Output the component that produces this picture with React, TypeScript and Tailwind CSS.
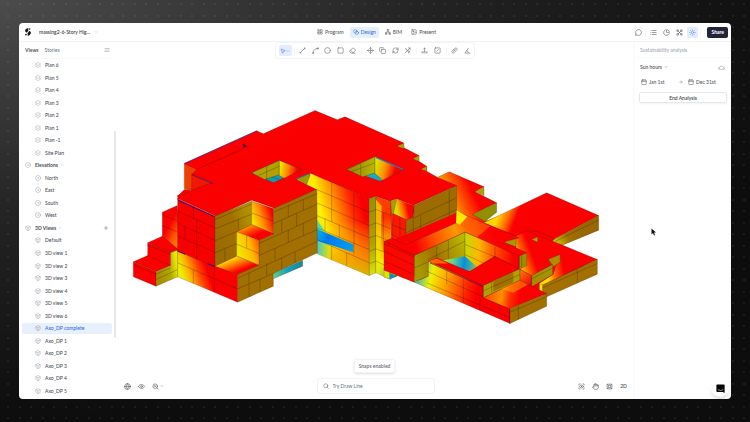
import { useState } from 'react';
import clsx from 'clsx';
import {
  ArrowRight,
  Blend,
  Box,
  Calendar,
  ChartPie,
  ChevronDown,
  ChevronUp,
  Circle,
  CircleDot,
  Copy,
  Eraser,
  Eye,
  Hand,
  Image,
  LayoutGrid,
  List,
  MessageCircle,
  MousePointer2,
  Move,
  Network,
  Plus,
  RefreshCw,
  ScanEye,
  Search,
  SearchX,
  Square,
  SquareSlash,
  Sun,
  Layers2,
  Globe,
  type LucideIcon,
} from 'lucide-react';

interface ViewItem {
  label: string;
  kind: 'plan' | 'elevation' | 'view3d' | 'group';
}

const viewItems: ViewItem[] = [
  { label: 'Plan 6', kind: 'plan' },
  { label: 'Plan 5', kind: 'plan' },
  { label: 'Plan 4', kind: 'plan' },
  { label: 'Plan 3', kind: 'plan' },
  { label: 'Plan 2', kind: 'plan' },
  { label: 'Plan 1', kind: 'plan' },
  { label: 'Plan -1', kind: 'plan' },
  { label: 'Site Plan', kind: 'plan' },
  { label: 'Elevations', kind: 'group' },
  { label: 'North', kind: 'elevation' },
  { label: 'East', kind: 'elevation' },
  { label: 'South', kind: 'elevation' },
  { label: 'West', kind: 'elevation' },
  { label: '3D Views', kind: 'group' },
  { label: 'Default', kind: 'view3d' },
  { label: '3D view 1', kind: 'view3d' },
  { label: '3D view 2', kind: 'view3d' },
  { label: '3D view 3', kind: 'view3d' },
  { label: '3D view 4', kind: 'view3d' },
  { label: '3D view 5', kind: 'view3d' },
  { label: '3D view 6', kind: 'view3d' },
  { label: 'Axo_DP complete', kind: 'view3d' },
  { label: 'Axo_DP 1', kind: 'view3d' },
  { label: 'Axo_DP 2', kind: 'view3d' },
  { label: 'Axo_DP 3', kind: 'view3d' },
  { label: 'Axo_DP 4', kind: 'view3d' },
  { label: 'Axo_DP 5', kind: 'view3d' },
];

const viewIcons = { plan: Layers2, elevation: CircleDot, view3d: Box };

const modes: { label: string; icon: LucideIcon }[] = [
  { label: 'Program', icon: LayoutGrid },
  { label: 'Design', icon: Blend },
  { label: 'BIM', icon: Network },
  { label: 'Present', icon: Image },
];

type Tool = { label: string; icon?: LucideIcon; d?: string };

const toolGroups: Tool[][] = [
  [
    { label: 'Line', d: 'M5 19L19 5M3 21h3v-3H3zM18 3h3v3h-3z' },
    { label: 'Arc', d: 'M4 20Q4 6 20 5M2 19h4v3H2zM18 3h4v4h-4z' },
    { label: 'Circle', icon: Circle },
    { label: 'Rectangle', icon: Square },
    { label: 'Erase', icon: Eraser },
  ],
  [
    { label: 'Move', icon: Move },
    { label: 'Copy', icon: Copy },
    { label: 'Rotate', icon: RefreshCw },
    { label: 'Scale', d: 'M3 21L21 3M14 3h7v7M3 5l6 2 2 6M13 13l3 7 5-5z' },
  ],
  [
    { label: 'Push pull', d: 'M12 3v12M8 7l4-4 4 4M4 14l-1 6h18l-1-6M8 15h8' },
    { label: 'Split', icon: SquareSlash },
  ],
  [
    { label: 'Measure', d: 'M3 15L15 3q6 0 6 6L9 21q-6 0-6-6ZM7 16L17 6M9 9l4 4' },
    { label: 'Angle', d: 'M16 3L3 21h19M9 13q6 1 6 8' },
  ],
];

function Glyph({ d, size = 7 }: { d: string; size?: number }) {
  return (
    <svg viewBox="0 0 24 24" width={size} height={size} fill="none" stroke="currentColor" strokeWidth="2" strokeLinejoin="round">
      <path d={d} />
    </svg>
  );
}

function Divider() {
  return <span className="mx-[2px] h-[6px] w-px shrink-0 bg-gray-100" />;
}

function Logo() {
  return (
    <svg viewBox="0 0 18 24" className="h-2 w-[6px]" fill="#15171c">
      <path d="M10 0v8L5 14Q0 12 0 7 2 1 10 0Z" />
      <path d="M13 8q5 2 5 7-2 7-10 9v-8Z" />
      <circle cx="14" cy="3" r="2.4" />
      <circle cx="3" cy="20" r="2.4" />
    </svg>
  );
}

function TopBar() {
  const [mode, setMode] = useState('Design');

  return (
    <header className="grid h-[19px] shrink-0 grid-cols-[1fr_auto_1fr] items-center border-b border-gray-100 pr-[3px] pl-[6px]">
      <div className="flex items-center gap-2">
        <Logo />
        <button className="flex items-center gap-1 font-semibold text-[#44474e]">
          massing2-6-Story Hig...
          <ChevronDown size={4} className="text-gray-400" />
        </button>
      </div>

      <nav className="flex items-center gap-[3px]">
        {modes.map(({ label, icon: Icon }) => (
          <button
            key={label}
            onClick={() => setMode(label)}
            className={clsx(
              'flex h-[11px] items-center gap-[2px] rounded-[2px] px-[3px] font-medium',
              label === mode ? 'bg-[#e6efff] text-[#3b74e0]' : 'text-[#55585f]',
            )}
          >
            <Icon size={6} />
            {label}
          </button>
        ))}
      </nav>

      <div className="flex items-center justify-end text-[#55585f]">
        <button aria-label="Comments" className="p-px"><MessageCircle size={7} /></button>
        <Divider />
        <button aria-label="Layers" className="ml-px p-px"><List size={7} /></button>
        <button aria-label="Metrics" className="ml-1 p-px"><ChartPie size={7} /></button>
        <button aria-label="Graph" className="ml-1 p-px">
          <Glyph d="M7 7l10 10M17 7L7 17M3 3h5v5H3zM16 3h5v5h-5zM3 16h5v5H3zM16 16h5v5h-5z" />
        </button>
        <button aria-label="Sun" className="ml-[3px] rounded-[2px] bg-[#e3edff] p-[2px] text-[#5b8def]">
          <Sun size={7} />
        </button>
        <Divider />
        <button className="ml-1 h-[11px] rounded-[2px] bg-[#22243a] px-1 font-bold text-white">Share</button>
      </div>
    </header>
  );
}

function Sidebar() {
  const [selected, setSelected] = useState('Axo_DP complete');

  return (
    <aside className="relative flex w-[97px] shrink-0 flex-col">
      <div className="mr-1 flex h-[17px] shrink-0 items-center gap-[6px] border-b border-gray-50 pr-[2px] pl-[6px]">
        <button className="font-bold text-[#55585f]">Views</button>
        <button className="text-gray-500">Stories</button>
        <button aria-label="Filter views" className="ml-auto text-gray-500">
          <Glyph size={6} d="M2 7h13M19 7h3M17 4v6M2 17h3M9 17h13M7 14v6" />
        </button>
      </div>
      <ul className="flex flex-1 flex-col pr-1 pb-[2px] pl-[3px]">
        {viewItems.map(({ label, kind }) => {
          if (kind === 'group') {
            const Icon = label === '3D Views' ? Box : CircleDot;
            return (
              <li key={label} className="flex flex-1 items-center gap-1 pr-[3px] pl-[3px] text-[#4b4e55]">
                <Icon size={6} className="text-gray-400" />
                <button className="flex items-center gap-[2px] font-bold">
                  {label}
                  <ChevronUp size={4} className="text-gray-400" />
                </button>
                {label === '3D Views' && (
                  <button aria-label="Add 3D view" className="ml-auto text-gray-500"><Plus size={6} /></button>
                )}
              </li>
            );
          }
          const Icon = viewIcons[kind];
          const active = label === selected;
          return (
            <li key={label} className="flex flex-1 items-center">
              <button
                onClick={() => setSelected(label)}
                className={clsx(
                  'flex h-[11px] w-full items-center gap-1 rounded-[2px] pl-[13px] font-medium',
                  active ? 'bg-[#e8effd] text-[#2f6ce5]' : 'text-[#4b4e55]',
                )}
              >
                <Icon size={6} className="text-gray-400" />
                {label}
              </button>
            </li>
          );
        })}
      </ul>
      <span className="absolute top-1/4 right-0 h-[207px] w-[2px] rounded-full bg-gray-200" />
    </aside>
  );
}

function Face({ p, fill = '#fb0000' }: { p: string; fill?: string }) {
  return <polygon points={p} fill={fill} stroke="#4a1c00" strokeWidth="1" strokeOpacity="0.7" strokeLinejoin="round" />;
}

function Joints({ d }: { d: string }) {
  return <path d={d} fill="none" stroke="#2a1500" strokeWidth="1.3" strokeOpacity="0.6" />;
}

interface RampProps {
  id: string;
  from: [number, number];
  to: [number, number];
  stops: [number, string][];
}

function Ramp({ id, from, to, stops }: RampProps) {
  return (
    <linearGradient id={id} gradientUnits="userSpaceOnUse" x1={from[0]} y1={from[1]} x2={to[0]} y2={to[1]}>
      {stops.map(([offset, color]) => (
        <stop key={offset} offset={offset} stopColor={color} />
      ))}
    </linearGradient>
  );
}

const OCHRE = '#a17000';
const OLIVE = '#b0a000';
const YELLOW = '#f0ec00';
const RED = '#fb0000';

// Sun-hours heat map on the massing, each group drawn in its own local origin
function Massing() {
  return (
    <svg viewBox="348 180 1551 897" className="min-h-0 w-full flex-1" role="img" aria-label="Sun hours analysis of the massing">
      <defs>
        <Ramp id="eastRoof" from={[225, 150]} to={[290, 120]} stops={[[0, '#f5a000'], [0.4, '#ff5a00'], [1, RED]]} />
        <Ramp id="farRoof" from={[318, 180]} to={[395, 210]} stops={[[0, '#e0d800'], [0.35, '#ffd800'], [0.7, '#ff7000'], [1, RED]]} />
        <Ramp id="farWall" from={[525, 250]} to={[600, 210]} stops={[[0, '#c8c800'], [0.5, OCHRE], [1, '#986800']]} />
        <Ramp id="lowRoof" from={[500, 330]} to={[550, 322]} stops={[[0, '#ffe000'], [0.4, '#ff7000'], [1, RED]]} />
        <Ramp id="kneeRoof" from={[405, 270]} to={[445, 255]} stops={[[0, '#f8c000'], [0.4, '#ff6000'], [1, RED]]} />
        <Ramp id="stepWall" from={[460, 380]} to={[540, 300]} stops={[[0, '#a88800'], [1, '#98a000']]} />
        <Ramp id="deck" from={[110, 270]} to={[330, 190]} stops={[[0, RED], [0.25, '#ff5000'], [0.55, '#f89800'], [0.8, '#ff5000'], [1, RED]]} />
        <Ramp id="courtLeft" from={[110, 320]} to={[255, 250]} stops={[[0, '#a89800'], [0.4, OCHRE], [1, '#b8b800']]} />
        <Ramp id="courtRight" from={[255, 270]} to={[400, 280]} stops={[[0, '#c8d800'], [0.3, '#ffb400'], [0.6, '#ff5400'], [1, RED]]} />
        <Ramp id="courtFloor" from={[180, 310]} to={[290, 325]} stops={[[0, '#f0e000'], [0.35, '#60d090'], [0.65, '#0090e0'], [1, '#80c060']]} />
        <Ramp id="southWall" from={[103, 350]} to={[290, 400]} stops={[[0, '#20b0c0'], [0.14, '#90d060'], [0.25, '#f0f000'], [0.5, '#ffa000'], [0.85, '#ff2000'], [1, RED]]} />
        <Ramp id="terrace" from={[320, 400]} to={[420, 415]} stops={[[0, '#ff5000'], [0.45, '#ff9000'], [0.7, '#ff3000'], [1, RED]]} />
        <Ramp id="tip" from={[415, 330]} to={[455, 375]} stops={[[0, '#ff8800'], [1, '#f00010']]} />

        <Ramp id="innerWall" from={[40, 370]} to={[190, 330]} stops={[[0, '#d8ee20'], [0.2, '#fff000'], [0.5, '#ff9000'], [0.8, '#ff2800'], [1, RED]]} />
        <linearGradient id="innerFade" x1="0" y1="0" x2="0" y2="1">
          <stop offset="0.45" stopColor="#ffd800" stopOpacity="0" />
          <stop offset="0.8" stopColor="#f4a800" stopOpacity="0.7" />
          <stop offset="1" stopColor="#d8b800" />
        </linearGradient>
        <Ramp id="skyBand" from={[50, 400]} to={[160, 450]} stops={[[0, '#00b0e8'], [0.3, '#0078f0'], [1, '#00a0f0']]} />
        <Ramp id="cyanGlow" from={[50, 440]} to={[90, 440]} stops={[[0, '#40c8d0'], [1, '#e8e000']]} />
        <Ramp id="pier" from={[208, 300]} to={[208, 520]} stops={[[0, '#989000'], [0.6, OLIVE], [1, '#d0e010']]} />
        <Ramp id="bay" from={[240, 310]} to={[240, 530]} stops={[[0, '#ff4000'], [0.2, '#ff3000'], [0.5, '#ff9a00'], [0.8, '#f8e800'], [1, '#b0d830']]} />
        <Ramp id="nook" from={[290, 325]} to={[322, 318]} stops={[[0, '#e0d800'], [0.5, '#ff7000'], [1, RED]]} />
        <Ramp id="wellRight" from={[225, 200]} to={[285, 215]} stops={[[0, '#d8e800'], [0.5, '#ff9000'], [1, RED]]} />
        <Ramp id="wellLeft" from={[140, 210]} to={[225, 210]} stops={[[0, '#908000'], [1, '#b8b800']]} />

        <Ramp id="shaftRight" from={[463, 210]} to={[515, 220]} stops={[[0, '#f0e800'], [0.5, '#ff8000'], [1, RED]]} />

        <Ramp id="baseWall" from={[158, 190]} to={[230, 165]} stops={[[0, '#e8f000'], [0.3, '#ffb000'], [0.7, '#ff4000'], [1, RED]]} />
        <Ramp id="sideWall" from={[100, 220]} to={[158, 210]} stops={[[0, '#a88c00'], [0.6, '#b0a800'], [1, '#e8e800']]} />
        <Ramp id="stepRed" from={[130, 80]} to={[165, 100]} stops={[[0, RED], [1, '#ff7000']]} />
        <Ramp id="upper" from={[378, 60]} to={[440, 40]} stops={[[0, '#f4f000'], [0.5, '#ff8a00'], [1, RED]]} />
        <Ramp id="ledge" from={[370, 75]} to={[385, 110]} stops={[[0, '#ffa800'], [0.5, '#ff5000'], [1, RED]]} />
        <Ramp id="lower" from={[335, 150]} to={[402, 130]} stops={[[0, '#f0ec00'], [0.6, '#ffb800'], [1, '#ff5a00']]} />
        <Ramp id="ledgeLow" from={[315, 178]} to={[330, 218]} stops={[[0, '#ffe000'], [0.45, '#ff8000'], [1, RED]]} />
        <Ramp id="frontOchre" from={[270, 120]} to={[380, 80]} stops={[[0, '#9a6c00'], [0.6, OCHRE], [1, '#b09000']]} />
        <Ramp id="coldEdge" from={[445, 230]} to={[533, 190]} stops={[[0, '#60d080'], [0.5, '#10a0c0'], [1, '#208890']]} />
      </defs>

      {/* East wing */}
      <g transform="translate(1140 480)">
        <polygon points="230,160 315,186 420,145 525,238 545,262 640,300 488,404 420,362 255,218" fill={RED} />
        <Face p="175,52 208,37 312,82 285,97 350,130 278,165 410,225 370,248 225,185 225,95" fill="url(#eastRoof)" />
        <Face p="285,97 312,82 312,108" fill={OLIVE} />
        <Face p="278,165 350,130 350,158 315,186" fill="#8f8f00" />
        <Face p="310,190 500,100 656,168 525,238 470,215 440,214 410,230" fill="url(#farRoof)" />
        <Face p="525,238 656,168 656,212 540,260 515,246" fill="url(#farWall)" />
        <Face p="408,228 440,214 545,256 652,300 488,376 440,350 405,290" />
        <polygon points="408,230 440,215 475,232 455,242 540,285 518,312 455,348 418,328 440,282 408,265" fill="url(#kneeRoof)" />
        <polygon points="540,285 590,290 570,338 488,378 478,372 520,345" fill="url(#lowRoof)" />
        <Face p="488,376 652,300 652,344 500,412 488,404" fill={OCHRE} />
        <Face p="478,372 488,376 488,404 478,395" fill={YELLOW} />
        <Face p="370,248 408,230 408,262" fill="#a89800" />
        <Face p="455,240 473,232 473,248" fill={OLIVE} />
        <Face p="505,299 540,285 540,308 520,322" fill="#a89000" />
        <Face p="318,195 355,212 350,216 318,202" fill="#ff5c00" />
        <Joints d="M488 385L652 312M592 330V370M525 246L656 182" />
      </g>

      {/* Main roof slab */}
      <g>
        <Face p="553,492 600,505 640,553 575,578 575,570 553,568" fill="#f04000" />
        <Face p="575,525 640,553 575,582" fill="#f01800" />
        <Face p="553,492 770,394 790,403 945,333 1012,361 1035,352 1210,430 1212,445 1257,468 1257,485 1280,500 1280,515 1312,533 1370,558 1240,618 1190,598 1170,605 1128,590 1107,598 932,522 890,540 950,570 825,627 755,602 648,650 535,598 532,588 635,550 575,525 590,510" />
        <Face p="1190,440 1212,431 1212,448" fill={OLIVE} />
        <Face p="1238,478 1257,468 1257,486" fill={OLIVE} />
        <Face p="1262,509 1280,500 1280,515" fill={OLIVE} />
        <path d="M553 492L770 394M575 525L640 553" stroke="#3020a0" strokeWidth="2" fill="none" />
        <path d="M590 510L725 450M730 432v12l18-3" stroke="#900000" strokeWidth="1.5" fill="none" />
        <path d="M730 432v12l10-4z" fill="#301060" />
      </g>

      {/* Light wells */}
      <g transform="translate(375 300)">
        <Face p="380,220 463,183 530,210 445,250" fill="#109cb0" />
        <Face p="380,220 463,183 463,226 418,240" fill={OLIVE} />
        <Face p="463,183 530,210 478,236 463,228" fill="url(#shaftRight)" />
        <Joints d="M400 228L463 200M425 200V240M440 232L463 240" />
        <Face p="515,238 555,222 553,262 535,250" fill="#a09800" />
        <path d="M515 238L555 222" stroke="#1080a0" strokeWidth="3" />
      </g>

      {/* Courtyard walls */}
      <g transform="translate(900 300)">
        <Face p="140,210 225,172 312,210 240,245" fill="#18a8c0" />
        <Face p="140,210 225,172 225,220 188,232" fill="url(#wellLeft)" />
        <Face p="225,172 312,210 248,242 225,222" fill="url(#wellRight)" />
        <path d="M228 174L310 210" stroke="#2878c0" strokeWidth="4" />
        <Joints d="M155 216L225 190M182 192V230" />

        <Face p="32,222 208,298 208,528 50,462 50,270 20,255" fill="url(#innerWall)" />
        <polygon points="50,230 208,298 208,528 50,462" fill="url(#innerFade)" />
        <polygon points="50,410 90,425 90,478 50,462" fill="url(#cyanGlow)" />
        <polygon points="50,360 75,395 50,388" fill="#50d8b0" />
        <polygon points="50,388 160,435 160,458 50,423" fill="url(#skyBand)" />
        <Joints d="M50 270L208 338M50 310L208 378M50 348L208 415M50 385L208 450M50 420L208 490M95 250V368M162 280V465M75 355V395M118 375V415M95 440V480M140 460V498" />
        <Face p="208,298 228,290 228,520 208,528" fill="url(#pier)" />
        <polygon points="268,305 345,318 322,440 275,440" fill="#f83000" />
        <Face p="228,290 272,307 272,540 228,520" fill="url(#bay)" />
        <polygon points="228,300 245,320 240,525 228,520" fill="#f0e800" opacity="0.7" />
        <Joints d="M208 338L228 330 272 348M208 378L228 370 272 388M208 415L228 408 272 426M208 455L228 448 272 465M208 492L228 485 272 505M250 340V455" />
        <Face p="272,307 290,298 292,335 275,345" fill="#a8a000" />
        <Face p="290,298 342,320 340,358 318,362 280,343" fill="url(#nook)" />
        <Face p="280,343 318,360 318,437 275,422" fill="#fa1800" />
        <Joints d="M275 375L318 392M275 405L318 425M300 352V430" />
        <Face p="318,362 342,352 342,318 470,258 470,370 318,437" fill="#9c6c00" />
        <Joints d="M318 400L470 330M342 355L470 295M362 348V415M448 270V380M340 330V425M362 415L470 368" />
        <Face p="272,515 290,522 290,530 272,538" fill="#1880b0" />
      </g>

      {/* South-east block around the lower court */}
      <g transform="translate(1140 480)">
        <polygon points="20,250 230,160 345,210 410,300 440,370 390,448 110,360" fill={RED} />
        <Face p="12,245 35,236 78,256 230,190 230,155 418,235 370,248 440,280 420,292 255,218 103,288" fill="url(#deck)" />
        <polygon points="230,152 262,172 240,196 228,190" fill="#f8ec00" />
        <polygon points="262,172 330,200 300,236 240,196" fill="#ff6000" opacity="0.6" />
        <polygon points="330,200 360,212 410,232 370,248 440,280 420,292 290,234" fill={RED} opacity="0.8" />
        <Face p="12,326 12,353 28,358 50,346 103,368 103,350" fill="#e0e400" />
        <path d="M28 340L52 350L28 358z" fill="#1090c8" />
        <Face p="12,245 103,288 103,368 12,332" fill="#fa0800" />
        <Joints d="M12 275L103 318M12 305L103 345M12 252L103 293" />
        <Face p="103,288 255,218 255,320 145,350 103,368" fill="url(#courtLeft)" />
        <Face p="255,218 418,290 418,328 345,290 270,335 255,328" fill="url(#courtRight)" />
        <polygon points="175,305 255,290 290,322 260,338" fill="url(#courtFloor)" />
        <Joints d="M145 300L255 245M103 325L150 305M170 260V300M205 242V298M255 255L345 292M255 285L310 310M345 262V292" />
        <Face p="103,368 145,350 145,305 310,378 310,415 390,448 390,492" fill="url(#southWall)" />
        <Face p="145,305 170,295 268,336 345,292 418,328 310,378" />
        <polygon points="145,305 170,297 205,312 160,312" fill="#ff9000" opacity="0.7" />
        <path d="M150 310L310 382V415M310 412L418 330M418 292V328M390 450V492M455 348V382" stroke="#401060" strokeWidth="2" fill="none" />
        <Joints d="M140 335L310 412M140 370L390 475M200 333V375M250 358V430M300 412V452" />
        <Face p="310,378 420,328 420,362 310,415" fill={OLIVE} />
        <polygon points="340,364 400,338 400,368 340,396" fill={OCHRE} />
        <Joints d="M310 394L420 345M335 368V400" />
        <Face p="310,415 420,362 500,402 390,448" fill="url(#terrace)" />
        <polygon points="365,388 420,362 445,374 400,400" fill="#ffc000" opacity="0.45" />
        <Face p="390,448 500,402 500,440 390,492" fill={OCHRE} />
        <Joints d="M390 458L500 412M415 440V480" />
        <Face p="418,290 440,280 440,318 418,330" fill="#989000" />
        <Face p="420,330 455,348 455,382 420,362" fill="url(#tip)" />
        <Face p="455,348 518,315 518,345 455,382" fill="url(#stepWall)" />
        <Joints d="M455 358L518 325M425 290V325" />
      </g>

      {/* Stepped west end and front block */}
      <g transform="translate(375 600)">
        <Face p="178,-30 160,-12 157,0 200,-30" />
        <Face p="112,38 157,18 160,60 160,160 112,112" fill="url(#stepRed)" />
        <Face p="68,130 112,110 160,150 137,160" />
        <Face p="68,130 137,158 137,200 68,170" />
        <Face p="25,187 68,168 137,198 93,216" />
        <Face p="25,187 93,216 93,260 25,232" />
        <Face p="93,216 137,198 137,160 158,152 158,232 93,260" fill="url(#sideWall)" />
        <Joints d="M112 45L158 65M112 78L158 98M68 136L137 165M25 195L93 224 137 205M93 240L158 210" />
        <Face p="158,152 338,225 338,308 158,232" fill="url(#baseWall)" />
        <Joints d="M158 190L338 268M205 212V252M268 200V278" />
        <Face p="158,-2 270,50 270,202 158,155" fill="#f60000" />
        <Joints d="M158 35L270 85M158 72L270 122M158 110L270 158M205 20V60M215 60V180M180 80V118" />
        <path d="M160 3L268 51M158 155l22 9M245 192l25 9" stroke="#301080" strokeWidth="3" fill="none" />
        <Face p="270,50 380,5 380,80 335,98 335,170 270,202" fill="url(#frontOchre)" />
        <Joints d="M270 60L380 14M270 88L380 44M270 124L335 96M270 160L335 132M300 150V185M340 58V92" />
        <Face p="445,27 575,-30 577,160 445,222 445,260 338,308 338,225 402,197 402,123 445,103" fill={OCHRE} />
        <Face p="380,5 445,27 445,105 380,75" fill="url(#upper)" />
        <Joints d="M380 40L445 65" />
        <Face p="380,75 445,103 402,123 335,97" fill="url(#ledge)" />
        <Face p="335,97 402,123 402,197 335,170" fill="url(#lower)" />
        <Joints d="M335 134L402 162M365 110V146" />
        <Face p="335,170 402,197 338,225 270,200" fill="url(#ledgeLow)" />
        <Joints d="M445 38L577 -18M445 72L577 14M402 132L577 52M402 168L577 90M338 236L577 126M338 268L445 222M490 18V52M535 0V32M470 62V98M515 42V80M490 92V128M535 72V108M450 146V182M425 190V228M372 220V254M405 240V275M372 256V292M470 175V210M510 158V190" />
        <Face p="445,222 533,182 533,200 445,238" fill="url(#coldEdge)" />
      </g>
    </svg>
  );
}

function Toolbar() {
  return (
    <div className="flex h-[17px] w-[200px] shrink-0 items-center self-center rounded-[3px] border border-gray-100 pl-[3px] text-[#66696f]">
      <button aria-label="Select" className="flex h-[11px] w-[13px] items-center justify-center rounded-[2px] bg-[#e3edff] text-[#3b74e0]">
        <MousePointer2 size={6} />
        <ChevronDown size={4} />
      </button>
      {toolGroups.map((group) => (
        <div key={group[0].label} className="contents">
          <Divider />
          {group.map(({ label, icon: Icon, d }) => (
            <button key={label} aria-label={label} className="flex flex-1 justify-center">
              {Icon ? <Icon size={7} /> : <Glyph d={d ?? ''} />}
            </button>
          ))}
        </div>
      ))}
    </div>
  );
}

function Canvas() {
  return (
    <main className="flex min-w-0 flex-1 flex-col">
      <Toolbar />
      <Massing />
      <div role="status" className="mb-[5px] flex h-[14px] items-center self-center rounded-[2px] border border-gray-100 px-1 font-semibold text-[#6b6e75] shadow-sm">
        Snaps enabled
      </div>
      <div className="mb-[5px] grid h-4 grid-cols-[1fr_118px_1fr] items-center pr-[6px] pl-2 text-[#55585f]">
        <div className="flex items-center gap-[7px]">
          <button aria-label="Location"><Globe size={7} /></button>
          <button aria-label="Visibility"><Eye size={7} /></button>
          <button aria-label="Zoom" className="flex items-center gap-px">
            <SearchX size={7} />
            <ChevronDown size={4} />
          </button>
        </div>
        <label className="flex h-4 items-center gap-1 rounded-[3px] border border-gray-100 px-[5px]">
          <Search size={6} />
          <input
            aria-label="Search commands"
            placeholder="Try Draw Line"
            className="min-w-0 flex-1 outline-none placeholder:text-gray-500"
          />
        </label>
        <div className="flex items-center justify-end gap-[7px]">
          <button aria-label="Look around"><ScanEye size={7} /></button>
          <button aria-label="Pan"><Hand size={7} /></button>
          <button aria-label="Fit to view">
            <Glyph d="M4 4h16v16H4zM8 8h8v8H8zM4 4l4 4M20 4l-4 4M4 20l4-4M20 20l-4-4" />
          </button>
          <button className="w-[7px] font-semibold">2D</button>
        </div>
      </div>
    </main>
  );
}

function AnalysisPanel() {
  return (
    <aside className="relative flex w-[98px] shrink-0 flex-col border-l-2 border-gray-50">
      <h2 className="h-4 border-b border-gray-50 pl-[5px] leading-[16px] text-gray-400">Sustainability analysis</h2>
      <div className="mt-[5px] flex h-2 items-center pr-[6px] pl-[5px] font-semibold text-[#55585f]">
        <select aria-label="Analysis type" className="appearance-none [field-sizing:content]">
          <option>Sun hours</option>
        </select>
        <ChevronDown size={4} className="ml-[2px]" />
        <button aria-label="Sun path" className="ml-auto text-gray-400">
          <Glyph d="M2 18h20M5 14a7 7 0 0 1 14 0M2 18v-5h4M22 18v-5h-4" />
        </button>
      </div>
      <div className="mx-[5px] mt-[5px] flex h-3 items-center text-[#55585f]">
        <button className="flex flex-1 items-center gap-[2px] pl-px font-medium">
          <Calendar size={6} />
          Jan 1st
        </button>
        <ArrowRight size={4} className="mr-1" />
        <button className="flex flex-1 items-center gap-[2px] pl-px font-medium">
          <Calendar size={6} />
          Dec 31st
        </button>
      </div>
      <button className="mx-1 mt-1 h-[11px] rounded-[2px] border border-gray-200 font-semibold text-[#44474e] shadow-xs">
        End Analysis
      </button>

      <svg viewBox="0 0 10 16" className="absolute top-[52%] left-4 h-2 w-[5px]">
        <path d="M1 1v12l3-3 2 5 2-1-2-5h4z" fill="#111" />
      </svg>

      <button
        aria-label="Open chat"
        className="absolute right-[2px] bottom-[2px] flex size-[18px] items-center justify-center rounded-full bg-white shadow-md"
      >
        <svg viewBox="0 0 24 24" className="size-[9px]">
          <path d="M3 1h18q2 0 2 2v21l-5-3H3q-2 0-2-2V3q0-2 2-2Z" fill="#050505" />
          <path d="M5 15q7 5 14 0" fill="none" stroke="#fff" strokeWidth="1.5" />
        </svg>
      </button>
    </aside>
  );
}

export default function App() {
  return (
    <div className="relative flex h-screen flex-col bg-[radial-gradient(ellipse_110%_100%_at_top_left,#4c4c4c_0%,#242424_50%,#0d0d0d_100%)] px-[19px] py-[23px] font-['Lato',sans-serif] text-[5px] leading-[8px]">
      {/* Dotted backdrop */}
      <div className="absolute inset-0 bg-[radial-gradient(circle_at_8px_4px,#ffffff10_1px,transparent_1px),radial-gradient(circle_at_20px_4px,#ffffff10_1px,transparent_1px),radial-gradient(circle_at_8px_16px,#ffffff10_1px,transparent_1px),radial-gradient(circle_at_20px_16px,#ffffff10_1px,transparent_1px)] bg-[size:23px_23px]" />
      <div className="relative flex min-h-0 flex-1 flex-col overflow-hidden rounded-[4px] bg-white">
        <TopBar />
        <div className="flex min-h-0 flex-1">
          <Sidebar />
          <Canvas />
          <AnalysisPanel />
        </div>
      </div>
    </div>
  );
}
